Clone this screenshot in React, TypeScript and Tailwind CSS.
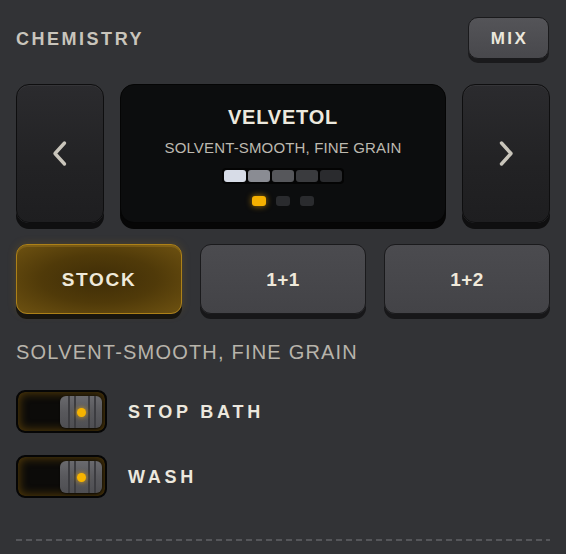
import React from "react";

function Chevron({ dir }: { dir: "left" | "right" }) {
  return (
    <svg width="18" height="27" viewBox="0 0 18 27" fill="none">
      {dir === "left" ? (
        <polyline points="13.5,3 4,13.5 13.5,24" stroke="#c9c5bb" strokeWidth="3.4" strokeLinecap="round" strokeLinejoin="round" />
      ) : (
        <polyline points="4.5,3 14,13.5 4.5,24" stroke="#c9c5bb" strokeWidth="3.4" strokeLinecap="round" strokeLinejoin="round" />
      )}
    </svg>
  );
}

function NavButton({ dir }: { dir: "left" | "right" }) {
  return (
    <button className="w-[88px] h-[139px] rounded-[13px] border-[1.5px] border-[#0e0e0f] bg-[linear-gradient(180deg,#2b2b2e_0%,#222224_60%,#1e1e20_100%)] shadow-[0_6px_0_#0f0f10,inset_0_1px_0_rgba(255,255,255,0.05)] flex items-center justify-center">
      <Chevron dir={dir} />
    </button>
  );
}

function Toggle({ label }: { label: string }) {
  return (
    <div className="flex items-center gap-[21px]">
      <div className="w-[91px] h-[43px] rounded-[9px] border-2 border-[#060606] bg-[#0c0b09] shadow-[inset_0_0_9px_2px_rgba(125,88,10,0.55)] flex items-center justify-end pr-[3px] pt-px">
        <div className="relative w-[42px] h-[32px] rounded-[6px] bg-[linear-gradient(180deg,#6a6a6e_0%,#58585c_50%,#4e4e52_100%)] shadow-[0_1px_2px_rgba(0,0,0,0.6)] overflow-hidden flex items-center justify-center">
          <span className="absolute top-0 bottom-0 left-[8px] w-[2px] bg-[#3c3c40]" />
          <span className="absolute top-0 bottom-0 left-[14px] w-[2px] bg-[#3c3c40]" />
          <span className="absolute top-0 bottom-0 left-[28px] w-[2px] bg-[#3c3c40]" />
          <span className="absolute top-0 bottom-0 left-[34px] w-[2px] bg-[#3c3c40]" />
          <span className="relative w-[9px] h-[9px] rounded-full bg-[#f7b400] shadow-[0_0_5px_rgba(255,180,0,0.8)]" />
        </div>
      </div>
      <span className="text-[18px] leading-none font-bold tracking-[0.21em] text-[#ece8de]">{label}</span>
    </div>
  );
}

export default function App() {
  const segs = ["#d7dce7", "#8a8c93", "#56575b", "#3a3b3e", "#2a2b2e"];
  return (
    <div className="w-[566px] h-[554px] overflow-hidden bg-[#323336] px-4 pt-[17px] font-['Liberation_Sans',Arial,sans-serif]">
      {/* header */}
      <div className="flex items-center justify-between h-[42px]">
        <span className="mt-[2px] text-[18px] leading-none font-bold tracking-[0.14em] text-[#c9c5bc]">CHEMISTRY</span>
        <button className="w-[81px] h-[42px] mr-px rounded-[10px] border-[1.5px] border-[#1a1a1c] bg-[linear-gradient(180deg,#545458_0%,#48484c_100%)] shadow-[0_4px_0_#1a1a1c] flex items-center justify-center">
          <span className="text-[17px] leading-none font-bold tracking-[0.14em] text-[#ebe7dc] pl-[2px]">MIX</span>
        </button>
      </div>

      {/* nav row */}
      <div className="mt-[25px] flex items-start gap-4">
        <NavButton dir="left" />
        <div className="w-[326px] h-[139px] rounded-[14px] border-[1.5px] border-[#050505] bg-[#0c0d0e] shadow-[0_6px_0_#060606] flex flex-col items-center pt-[22px]">
          <span className="text-[20px] leading-none font-bold tracking-[0.04em] text-[#ede9de]">VELVETOL</span>
          <span className="mt-[13px] text-[15px] leading-none tracking-[0.01em] text-[#bdb9b0]">SOLVENT-SMOOTH, FINE GRAIN</span>
          <div className="mt-[13px] flex gap-[2px] p-[2px] rounded-[4px] bg-[#040404]">
            {segs.map((c, i) => (
              <div key={i} className="w-[22px] h-[12px] rounded-[3px]" style={{ backgroundColor: c }} />
            ))}
          </div>
          <div className="mt-[12px] flex gap-[10px]">
            <div className="w-[14px] h-[10px] rounded-[3px] bg-[#f6b000] shadow-[0_0_6px_rgba(255,176,0,0.65)]" />
            <div className="w-[14px] h-[10px] rounded-[3px] bg-[#2a2b2e]" />
            <div className="w-[14px] h-[10px] rounded-[3px] bg-[#2a2b2e]" />
          </div>
        </div>
        <NavButton dir="right" />
      </div>

      {/* tabs */}
      <div className="mt-[21px] grid grid-cols-3 gap-[18px]">
        <button className="h-[70px] rounded-[11px] border-[1.5px] border-[#ad8118] bg-[radial-gradient(ellipse_at_center,#3f2d07_0%,#503a09_50%,#6e5211_100%)] shadow-[0_5px_0_#17150f,0_0_8px_rgba(170,120,10,0.25),inset_0_2px_0_rgba(200,150,40,0.25)] flex items-center justify-center">
          <span className="text-[19px] leading-none font-bold tracking-[0.09em] text-[#efe9da]">STOCK</span>
        </button>
        <button className="h-[70px] rounded-[11px] border-[1.5px] border-[#1a1a1c] bg-[linear-gradient(180deg,#4b4b4f_0%,#434347_100%)] shadow-[0_5px_0_#171719] flex items-center justify-center">
          <span className="text-[19px] leading-none font-bold tracking-[0.02em] text-[#efe9da]">1+1</span>
        </button>
        <button className="h-[70px] rounded-[11px] border-[1.5px] border-[#1a1a1c] bg-[linear-gradient(180deg,#4b4b4f_0%,#434347_100%)] shadow-[0_5px_0_#171719] flex items-center justify-center">
          <span className="text-[19px] leading-none font-bold tracking-[0.02em] text-[#efe9da]">1+2</span>
        </button>
      </div>

      {/* caption */}
      <div className="mt-[28px] text-[20px] leading-none tracking-[0.06em] text-[#b8b4ab]">SOLVENT-SMOOTH, FINE GRAIN</div>

      {/* toggles */}
      <div className="mt-[28px] flex flex-col gap-[22px]">
        <Toggle label="STOP BATH" />
        <Toggle label="WASH" />
      </div>

      {/* dashed divider */}
      <div className="mt-[41px] h-[2px] w-full bg-[repeating-linear-gradient(90deg,#55565a_0px,#55565a_6px,transparent_6px,transparent_10px)]" />
    </div>
  );
}
